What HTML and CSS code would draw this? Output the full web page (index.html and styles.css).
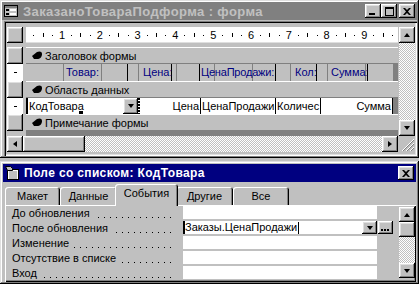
FILE: index.html
```html
<!DOCTYPE html>
<html lang="ru">
<head>
  <meta charset="UTF-8" />
  <title>ЗаказаноТовараПодформа : форма</title>
  <link rel="stylesheet" href="styles.css">
</head>
<body>

  <div class="win form-win">
    <div class="titlebar inactive">
      <svg class="ticon" viewBox="0 0 16 16">
        <rect x="1.5" y="2.5" width="13" height="11" fill="#c0c0c0" stroke="#000"/>
        <rect x="2" y="3" width="12" height="2" fill="#808080"/>
        <rect x="3" y="6" width="3" height="2" fill="#000"/><rect x="7" y="6" width="6" height="2" fill="#fff"/>
        <rect x="3" y="10" width="3" height="2" fill="#000"/><rect x="7" y="10" width="6" height="2" fill="#fff"/>
      </svg>
      <span class="ttext big">ЗаказаноТовараПодформа : форма</span>
      <span class="tbtn"><svg width="8" height="7"><rect x="0" y="5" width="6" height="2"/></svg></span>
      <span class="tbtn"><svg width="9" height="9"><path d="M0 0h9v9H0zM1 2v6h7V2z" fill-rule="evenodd"/></svg></span>
      <span class="tbtn close"><svg width="8" height="7"><path d="M0 0h2l2 2 2-2h2L5 3.5 8 7H6L4 5 2 7H0l3-3.5z"/></svg></span>
    </div>

    <div class="client">
      <div class="corner"></div>

      <div class="hruler">
        <span class="cm"><i class="dot"></i><i class="tick"></i><i class="dot"></i><b>1</b></span>
        <span class="cm"><i class="dot"></i><i class="tick"></i><i class="dot"></i><b>2</b></span>
        <span class="cm"><i class="dot"></i><i class="tick"></i><i class="dot"></i><b>3</b></span>
        <span class="cm"><i class="dot"></i><i class="tick"></i><i class="dot"></i><b>4</b></span>
        <span class="cm"><i class="dot"></i><i class="tick"></i><i class="dot"></i><b>5</b></span>
        <span class="cm"><i class="dot"></i><i class="tick"></i><i class="dot"></i><b>6</b></span>
        <span class="cm"><i class="dot"></i><i class="tick"></i><i class="dot"></i><b>7</b></span>
        <span class="cm"><i class="dot"></i><i class="tick"></i><i class="dot"></i><b>8</b></span>
        <span class="cm"><i class="dot"></i><i class="tick"></i><i class="dot"></i><b>9</b></span>
        <span class="cm"><i class="dot"></i><i class="tick"></i><i class="dot"></i></span>
      </div>

      <div class="vscroll">
        <span class="sbtn"><i class="arr up"></i></span>
        <span class="track"></span>
        <span class="sbtn"><i class="arr down"></i></span>
      </div>

      <div class="vruler">
        <span class="vbox"></span>
        <span class="vmark"><i></i></span>
        <span class="vbox"></span>
        <span class="vmark"><i></i></span>
        <span class="vbox"></span>
      </div>

      <div class="canvas">
        <div class="bar"><svg class="selic" viewBox="0 0 11 9"><path d="M0 5L5 1C7 0 10 0 10 3C10 6 8 8 5 8H2Z"/></svg>Заголовок формы</div>
        <div class="sec hdr">
          <span></span>
          <span class="lbl">Товар:</span>
          <span></span>
          <span class="lbl">Цена:</span>
          <span></span>
          <span class="lbl lb">ЦенаПродажи:</span>
          <span></span>
          <span class="lbl">Кол:</span>
          <span></span>
          <span class="lbl">Сумма:</span>
          <span></span>
          <span class="off"></span>
        </div>
        <div class="bar"><svg class="selic" viewBox="0 0 11 9"><path d="M0 5L5 1C7 0 10 0 10 3C10 6 8 8 5 8H2Z"/></svg>Область данных</div>
        <div class="sec det">
          <span class="fld combo">КодТовара<i class="handle"></i></span>
          <span class="ddbtn"><i class="arr down"></i></span>
          <span class="grab"></span>
          <span class="fld right">Цена</span>
          <span class="fld sep">ЦенаПродажи</span>
          <span class="fld sep">Количес</span>
          <span class="fld sep right">Сумма</span>
          <span class="edge"></span>
          <span class="off"></span>
        </div>
        <div class="bar"><svg class="selic" viewBox="0 0 11 9"><path d="M0 5L5 1C7 0 10 0 10 3C10 6 8 8 5 8H2Z"/></svg>Примечание формы</div>
        <div class="rest"></div>
      </div>

      <div class="hscroll">
        <span class="sbtn"><i class="arr left"></i></span>
        <span class="thumb"></span>
        <span class="track"></span>
        <span class="sbtn"><i class="arr right"></i></span>
      </div>

      <div class="grip">
        <svg width="16" height="16"><path d="M15 3L3 15M15 7L7 15M15 11L11 15" stroke="#fff"/><path d="M15 4L4 15M15 8L8 15M15 12L12 15" stroke="#808080"/></svg>
      </div>
    </div>
  </div>

  <div class="win prop-win">
    <div class="titlebar active">
      <svg class="ticon" viewBox="0 0 16 16">
        <rect x="3.5" y="4.5" width="11" height="10" fill="#fff" stroke="#000"/>
        <path d="M5 7h8M5 9h8M5 11h8M5 13h8" stroke="#808080"/>
        <path d="M1.5 1.5h5l2 2v2h-5z" fill="#c0c0c0" stroke="#000"/>
      </svg>
      <span class="ttext">Поле со списком: КодТовара</span>
      <span class="tbtn close"><svg width="8" height="7"><path d="M0 0h2l2 2 2-2h2L5 3.5 8 7H6L4 5 2 7H0l3-3.5z"/></svg></span>
    </div>

    <div class="tabs">
      <span class="tab t1">Макет</span>
      <span class="tab t2">Данные</span>
      <span class="tab t3 sel">События</span>
      <span class="tab t4">Другие</span>
      <span class="tab t5">Все</span>
    </div>

    <div class="panel">
      <div class="plist">
        <div class="prow"><span class="plabel"><span>До обновления</span></span><span class="pval"></span></div>
        <div class="prow">
          <span class="plabel"><span>После обновления</span></span>
          <span class="pval combo">Заказы.ЦенаПродажи<i class="caret"></i></span>
          <span class="btn"><i class="arr down"></i></span>
          <span class="btn ell"><svg width="9" height="2"><rect x="0" y="0" width="2" height="2"/><rect x="3" y="0" width="2" height="2"/><rect x="6" y="0" width="2" height="2"/></svg></span>
        </div>
        <div class="prow"><span class="plabel"><span>Изменение</span></span><span class="pval"></span></div>
        <div class="prow"><span class="plabel"><span>Отсутствие в списке</span></span><span class="pval"></span></div>
        <div class="prow"><span class="plabel"><span>Вход</span></span><span class="pval"></span></div>
      </div>
      <div class="pscroll">
        <span class="sbtn"><i class="arr up"></i></span>
        <span class="thumb"></span>
        <span class="track"></span>
        <span class="sbtn"><i class="arr down"></i></span>
      </div>
    </div>
  </div>

</body>
</html>
```

FILE: styles.css
```css
* {
  box-sizing: border-box;
}
body {
  margin: 0;
  width: 419px;
  height: 284px;
  overflow: hidden;
  background: #c0c0c0;
  font-family: "Liberation Sans", Arial, sans-serif;
  font-size: 11px;
  color: #000;
}
i, b {
  font-style: normal;
  font-weight: normal;
}

/* windows */
.win {
  background: #c0c0c0;
  padding: 2px;
  display: flex;
  flex-direction: column;
  box-shadow: inset -1px -1px #000, inset 1px 1px #dfdfdf, inset -2px -2px #808080, inset 2px 2px #fff;
}
.form-win {
  height: 158px;
}
.prop-win {
  height: 123px;
  margin-top: 3px;
  padding: 3px 3px 2px;
  overflow: hidden;
}
.titlebar {
  flex: none;
  height: 18px;
  display: flex;
  align-items: center;
  padding: 0 2px 0 1px;
  font-size: 12px;
  font-weight: bold;
  letter-spacing: 0.35px;
}
.titlebar.inactive {
  background: #808080;
  color: #c0c0c0;
}
.titlebar.active {
  background: #000080;
  color: #fff;
}
.ticon {
  flex: none;
  width: 16px;
  height: 16px;
  margin-right: 4px;
}
.ttext {
  flex: 1;
  white-space: nowrap;
  overflow: hidden;
}
.ttext.big {
  font-size: 13px;
  letter-spacing: 0.4px;
}
.tbtn, .sbtn, .thumb, .corner, .vbox, .btn, .ddbtn {
  background: #c0c0c0;
  box-shadow: inset -1px -1px #000, inset 1px 1px #fff, inset -2px -2px #808080, inset 2px 2px #dfdfdf;
}
.tbtn {
  flex: none;
  width: 16px;
  height: 14px;
  display: flex;
  align-items: center;
  justify-content: center;
}
.tbtn.close {
  margin-left: 2px;
}

/* arrows */
.arr {
  display: block;
  width: 1px;
  height: 0;
}
.arr.up {
  border-left: 3px solid transparent;
  border-right: 3px solid transparent;
  border-bottom: 4px solid #000;
}
.arr.down {
  border-left: 3px solid transparent;
  border-right: 3px solid transparent;
  border-top: 4px solid #000;
}
.arr.left {
  width: 0;
  height: 1px;
  border-top: 3px solid transparent;
  border-bottom: 3px solid transparent;
  border-right: 4px solid #000;
}
.arr.right {
  width: 0;
  height: 1px;
  border-top: 3px solid transparent;
  border-bottom: 3px solid transparent;
  border-left: 4px solid #000;
}
.sbtn {
  flex: none;
  width: 16px;
  height: 16px;
  display: flex;
  align-items: center;
  justify-content: center;
}
.track {
  flex: 1;
  background: repeating-conic-gradient(#fff 0 25%, #c0c0c0 0 50%) 0 0 / 2px 2px;
}

/* form designer */
.client {
  flex: 1;
  margin: 1px 0 0 2px;
  padding: 6px 0 0 3px;
  display: grid;
  grid-template-columns: 16px 3px 372px 1px 16px;
  grid-template-rows: 16px 4px 17px 17px 17px 16px 17px 5px 16px;
  box-shadow: inset 1px 1px #808080, inset 2px 2px #000, inset -1px -1px #fff, inset -2px -2px #dfdfdf;
}
.corner {
  grid-area: 1 / 1;
}
.hruler {
  grid-area: 1 / 3;
  background: #fff;
  display: flex;
  align-items: center;
  padding-left: 3px;
  overflow: hidden;
  box-shadow: inset 0 -1px #dfdfdf;
}
.cm {
  flex: none;
  width: 37.8px;
  display: flex;
}
.cm i, .cm b {
  flex: none;
  width: 9.45px;
  display: flex;
  justify-content: center;
  align-items: center;
  height: 12px;
  font-size: 11px;
}
.cm .dot::after {
  content: "";
  width: 1px;
  height: 1px;
  background: #000;
}
.cm .tick::after {
  content: "";
  width: 1px;
  height: 4px;
  background: #000;
}
.vscroll {
  grid-area: 1 / 5 / 9 / 6;
  display: flex;
  flex-direction: column;
}
.vruler {
  grid-area: 3 / 1 / 8 / 2;
  display: flex;
  flex-direction: column;
}
.vbox {
  height: 17px;
}
.vmark {
  height: 17px;
  background: #fff;
  display: flex;
  align-items: center;
  justify-content: center;
}
.vmark + .vbox + .vmark {
  height: 16px;
}
.vmark i {
  width: 3px;
  height: 1px;
  background: #000;
}
.canvas {
  grid-area: 3 / 3 / 9 / 4;
  display: flex;
  flex-direction: column;
}
.bar {
  height: 17px;
  display: flex;
  align-items: center;
  padding-left: 6px;
  background: #c0c0c0;
  box-shadow: inset 0 1px #fff, inset 0 -1px #808080;
}
.selic {
  width: 11px;
  height: 9px;
  margin-right: 2px;
}
.sec {
  display: grid;
}
.hdr {
  height: 17px;
  grid-template-columns: 37px 65px 12px 32px 27px 77px 16px 25px 11px 40px 25px 5px;
  background: repeating-linear-gradient(90deg, transparent 0 36.8px, #808080 36.8px 37.8px);
}
.lbl {
  color: #000080;
  padding-left: 3px;
  line-height: 16px;
  border-right: 1px solid #000;
  white-space: nowrap;
}
.lbl.lb {
  border-left: 1px solid #000;
  padding-left: 1px;
  letter-spacing: -0.2px;
}
.off {
  background: #808080;
}
.det {
  height: 16px;
  grid-template-columns: 97px 15px 3px 59px 75px 45px 72px 1px 5px;
  background: #fff;
}
.fld {
  line-height: 16px;
  white-space: nowrap;
  padding: 0 1px;
}
.fld.sep {
  border-left: 1px solid #000;
}
.fld.right {
  text-align: right;
}
.combo {
  position: relative;
  border-left: 2px solid #000;
}
.handle {
  position: absolute;
  left: 51px;
  bottom: 0;
  width: 4px;
  height: 3px;
  background: #000;
}
.ddbtn {
  display: flex;
  align-items: center;
  justify-content: center;
}
.grab {
  background: repeating-linear-gradient(#000 0 2px, #fff 2px 3px);
  margin: 0 1px 0 0;
}
.edge {
  background: #000;
}
.rest {
  flex: 1;
  background: #808080;
}
.hscroll {
  grid-area: 9 / 1 / 10 / 4;
  display: flex;
}
.hscroll .thumb {
  width: 62px;
}
.grip {
  grid-area: 9 / 5;
  display: flex;
}

/* property sheet */
.tabs {
  flex: none;
  height: 21px;
  margin-top: 2px;
  padding-left: 2px;
  display: flex;
  align-items: flex-end;
}
.tab {
  height: 18px;
  display: flex;
  align-items: center;
  justify-content: center;
  padding-bottom: 1px;
  border-radius: 3px 3px 0 0;
  background: #c0c0c0;
  box-shadow: inset 1px 1px #fff, inset -1px 0 #000, inset -2px 0 #808080;
}
.t1 { width: 55px; }
.t2 { width: 57px; }
.t3 { width: 59px; }
.t4 { width: 57px; }
.t5 { width: 56px; }
.tab.sel {
  position: relative;
  z-index: 1;
  width: 63px;
  height: 22px;
  margin: 0 -2px -1px;
  padding-bottom: 4px;
}
.panel {
  flex: 1;
  margin-left: 2px;
  padding: 1px 0 0 2px;
  display: flex;
  overflow: hidden;
  box-shadow: inset 1px 1px #fff, inset -1px -1px #000, inset -2px -2px #808080;
}
.plist {
  width: 392px;
  flex: none;
}
.prow {
  height: 15px;
  display: flex;
}
.plabel {
  flex: none;
  width: 175px;
  padding: 0 6px 0 5px;
  line-height: 15px;
  background-image: linear-gradient(90deg, #000 1px, transparent 1px);
  background-size: 6px 1px;
  background-repeat: repeat-x;
  background-origin: content-box;
  background-clip: content-box;
  background-position: 2px 11px;
}
.plabel span {
  background: #c0c0c0;
  padding-right: 3px;
}
.pval {
  flex: none;
  width: 194px;
  height: 13px;
  margin-left: 1px;
  background: #fff;
  line-height: 13px;
  white-space: nowrap;
}
.pval.combo {
  width: 179px;
  display: flex;
  align-items: center;
}
.caret {
  width: 1px;
  height: 12px;
  background: #000;
  margin-left: 1px;
}
.btn {
  flex: none;
  width: 15px;
  height: 13px;
  margin-right: 1px;
  display: flex;
  align-items: center;
  justify-content: center;
}
.btn.ell {
  padding-top: 4px;
}
.pscroll {
  width: 16px;
  height: 71px;
  margin-top: 1px;
  display: flex;
  flex-direction: column;
}
.pscroll .sbtn {
  height: 15px;
}
.pscroll .thumb {
  height: 15px;
}
```
